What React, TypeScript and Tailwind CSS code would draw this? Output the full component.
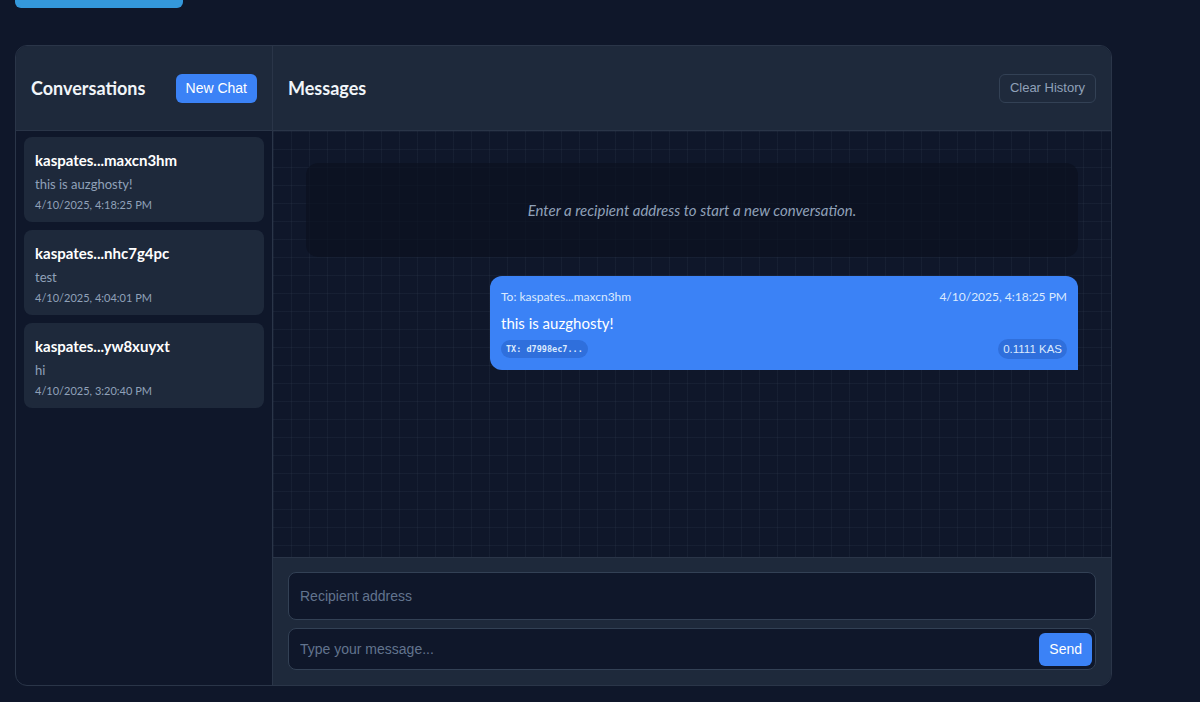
const CONVERSATIONS = [
  { address: 'kaspates...maxcn3hm', preview: 'this is auzghosty!', time: '4/10/2025, 4:18:25 PM' },
  { address: 'kaspates...nhc7g4pc', preview: 'test', time: '4/10/2025, 4:04:01 PM' },
  { address: 'kaspates...yw8xuyxt', preview: 'hi', time: '4/10/2025, 3:20:40 PM' },
];

const GRID_BG =
  'bg-[linear-gradient(rgba(148,163,184,0.06)_1px,transparent_1px),linear-gradient(90deg,rgba(148,163,184,0.06)_1px,transparent_1px)] bg-[size:18px_18px]';

export default function App() {
  return (
    <div className="h-[702px] overflow-hidden bg-[#0f172a] px-[15px] font-['Lato',sans-serif] text-slate-100">
      <div className="-mt-[29px] h-[37px] w-[168px] rounded-md bg-[#3498db]" />

      <div className="mt-[37px] flex h-[641px] w-[1097px] overflow-hidden rounded-xl border border-[#2a3548] bg-[#0f172a]">
        {/* sidebar */}
        <aside className="flex w-[257px] shrink-0 flex-col border-r border-[#2a3548]">
          <header className="flex h-[85px] shrink-0 items-center justify-between border-b border-[#2a3548] bg-[#1e293b] px-[15px]">
            <h2 className="text-[18px] font-bold">Conversations</h2>
            <button
              type="button"
              className="h-[29px] rounded-md bg-[#3b82f6] px-[10px] font-['Liberation_Sans',Arial,sans-serif] text-[14px] text-white"
            >
              New Chat
            </button>
          </header>
          <ul className="flex flex-col gap-2 px-2 pt-[6px]">
            {CONVERSATIONS.map((c) => (
              <li key={c.address} className="h-[85px] rounded-lg bg-[#1e293b] px-[11px] pt-[13px]">
                <p className="text-[15px] font-bold leading-5 text-white">{c.address}</p>
                <p className="mt-[6px] text-[13px] leading-4 text-slate-400">{c.preview}</p>
                <p className="mt-[5px] text-[11px] leading-4 text-slate-400">{c.time}</p>
              </li>
            ))}
          </ul>
        </aside>

        {/* messages */}
        <section className="flex min-w-0 flex-1 flex-col">
          <header className="flex h-[85px] shrink-0 items-center justify-between border-b border-[#2a3548] bg-[#1e293b] px-[15px]">
            <h2 className="text-[18px] font-bold">Messages</h2>
            <button
              type="button"
              className="h-[29px] rounded-md border border-[#334155] bg-[#1f2a3c] px-[10px] font-['Liberation_Sans',Arial,sans-serif] text-[13px] text-slate-400"
            >
              Clear History
            </button>
          </header>

          <div className={`flex flex-1 flex-col gap-[19px] px-[33px] pt-[32px] ${GRID_BG}`}>
            <div className="flex h-[94px] items-center justify-center rounded-xl bg-[#0b1120]/70">
              <p className="text-[15px] italic text-slate-400">
                Enter a recipient address to start a new conversation.
              </p>
            </div>

            <div className="flex justify-end">
              <div className="h-[94px] w-[588px] rounded-xl rounded-br-none bg-[#3b82f6] px-[11px] pt-[13px]">
                <div className="flex items-center justify-between text-[12px] leading-4 text-blue-100">
                  <span>To: kaspates...maxcn3hm</span>
                  <span>4/10/2025, 4:18:25 PM</span>
                </div>
                <p className="mt-[8px] text-[15px] leading-5 text-white">this is auzghosty!</p>
                <div className="mt-[6px] flex items-center justify-between">
                  <span className="rounded-full bg-[#2f6fdc] px-[5px] py-[3px] font-['DejaVu_Sans_Mono',monospace] text-[8.5px] font-bold leading-3 text-blue-100">
                    TX: d7998ec7...
                  </span>
                  <span className="rounded-full bg-[#2f6fdc] px-[5px] py-[2px] font-['Liberation_Sans',Arial,sans-serif] text-[11.5px] leading-4 text-blue-100">
                    0.1111 KAS
                  </span>
                </div>
              </div>
            </div>
          </div>

          <footer className="flex h-[128px] shrink-0 flex-col gap-2 border-t border-[#2a3548] bg-[#1e293b] px-[15px] pt-[14px]">
            <input
              placeholder="Recipient address"
              className="h-[48px] rounded-lg border border-[#334155] bg-[#0f172a] px-[11px] font-['Liberation_Sans',Arial,sans-serif] text-[14px] text-slate-200 outline-none placeholder:text-slate-500"
            />
            <div className="flex h-[42px] items-center rounded-lg border border-[#334155] bg-[#0f172a] pl-[11px] pr-[3px]">
              <input
                placeholder="Type your message..."
                className="min-w-0 flex-1 bg-transparent font-['Liberation_Sans',Arial,sans-serif] text-[14px] text-slate-200 outline-none placeholder:text-slate-500"
              />
              <button
                type="button"
                className="h-[33px] rounded-md bg-[#3b82f6] px-[10px] font-['Liberation_Sans',Arial,sans-serif] text-[14px] text-white"
              >
                Send
              </button>
            </div>
          </footer>
        </section>
      </div>
    </div>
  );
}
